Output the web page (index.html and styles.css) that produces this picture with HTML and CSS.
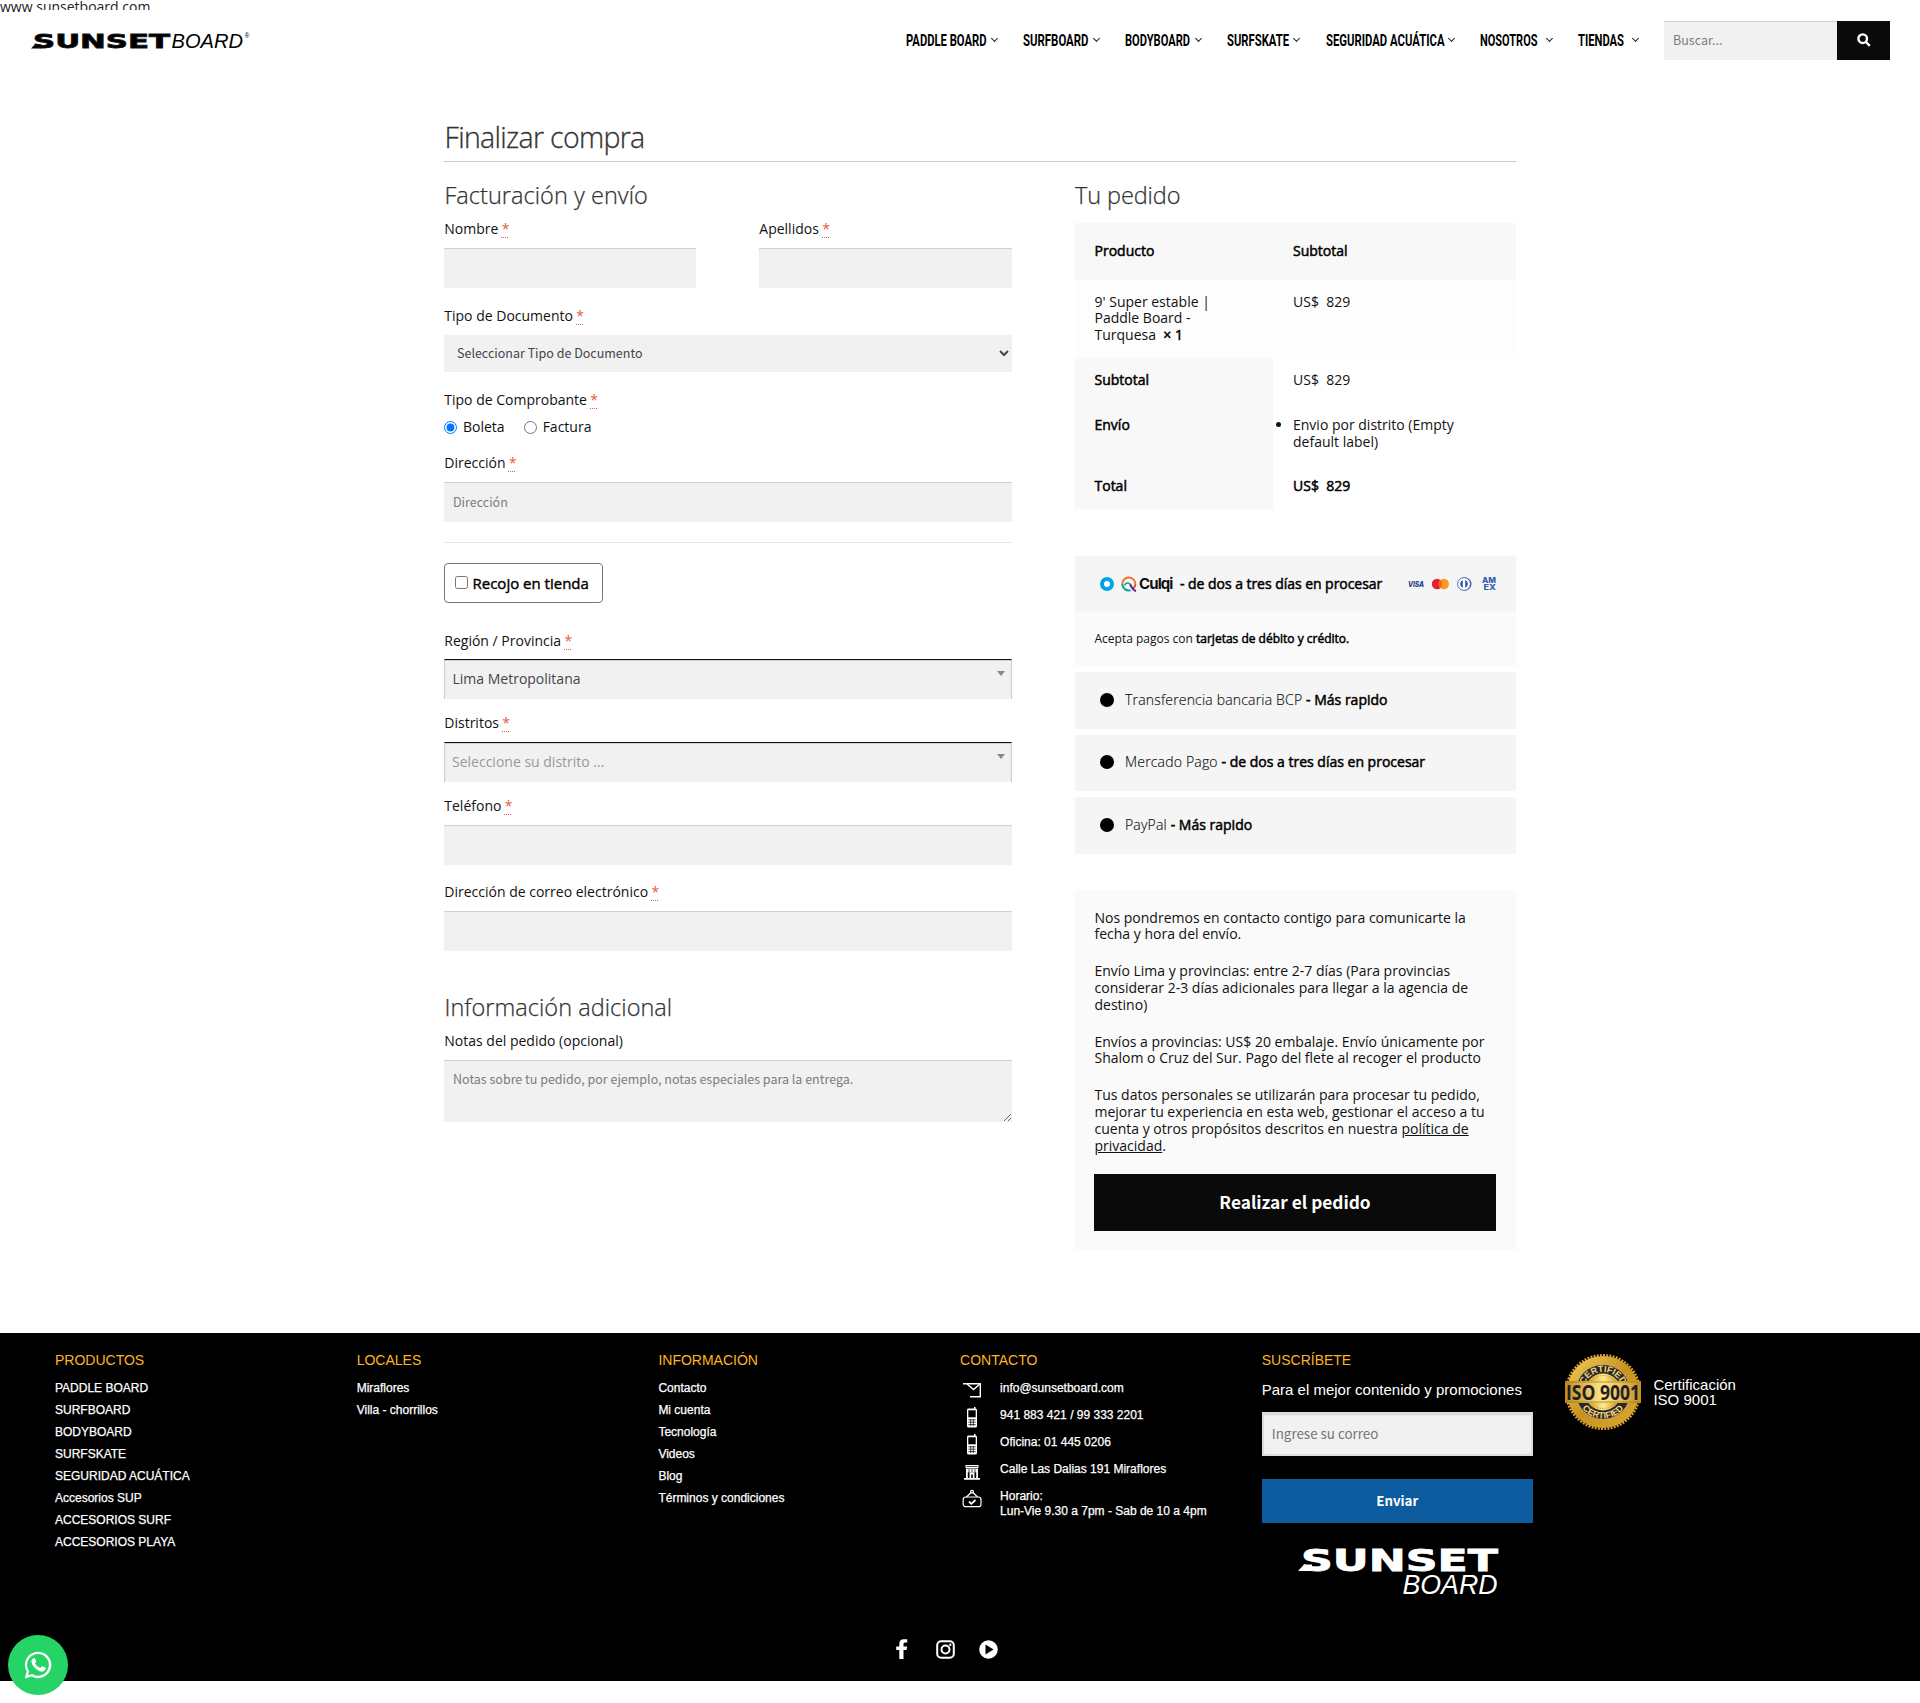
FILE: index.html
```html
<!DOCTYPE html>
<html lang="es">
<head>
<meta charset="utf-8">
<title>Finalizar compra - Sunset Board</title>
<link rel="stylesheet" href="styles.css">
</head>
<body>
<div class="site-url">www.sunsetboard.com</div>
<header class="header">
  <a class="logo"><svg width="220" height="22" viewBox="0 0 220 22">
    <path d="M0 17.600 4 13.200H10V17.600Z"/>
    <text class="logo-wide" x="2" y="17.400" font-size="19.500" textLength="137" lengthAdjust="spacingAndGlyphs">SUNSET</text>
    <text class="logo-thin" x="140.500" y="17.400" font-size="21" textLength="71.500" lengthAdjust="spacingAndGlyphs">BOARD</text>
    <text class="logo-reg" x="216" y="7" font-size="6.500" text-anchor="middle">®</text>
  </svg></a>
  <nav class="nav">
    <a style="width:93px"><svg width="81" height="20"><text x="0" y="16" textLength="80.500" lengthAdjust="spacingAndGlyphs">PADDLE BOARD</text></svg><i></i></a>
    <a style="width:77px"><svg width="66" height="20"><text x="0" y="16" textLength="65.500" lengthAdjust="spacingAndGlyphs">SURFBOARD</text></svg><i></i></a>
    <a style="width:77px"><svg width="66" height="20"><text x="0" y="16" textLength="65" lengthAdjust="spacingAndGlyphs">BODYBOARD</text></svg><i></i></a>
    <a style="width:74px"><svg width="63" height="20"><text x="0" y="16" textLength="62" lengthAdjust="spacingAndGlyphs">SURFSKATE</text></svg><i></i></a>
    <a style="width:130px"><svg width="120" height="20"><text x="0" y="16" textLength="118.500" lengthAdjust="spacingAndGlyphs">SEGURIDAD ACUÁTICA</text></svg><i></i></a>
    <a style="width:73px"><svg width="59" height="20"><text x="0" y="16" textLength="57.500" lengthAdjust="spacingAndGlyphs">NOSOTROS</text></svg><i></i></a>
    <a style="width:61px"><svg width="48" height="20"><text x="0" y="16" textLength="46" lengthAdjust="spacingAndGlyphs">TIENDAS</text></svg><i></i></a>
  </nav>
  <form class="search">
    <input class="control" type="text" placeholder="Buscar...">
    <button type="button"><svg width="14" height="14" viewBox="0 0 14 14"><circle cx="5.700" cy="5.700" r="4.300"/><path d="M9 9 12.800 12.800"/></svg></button>
  </form>
</header>

<main class="page">
  <h1>Finalizar compra</h1>
  <div class="columns">
    <form class="billing">
      <h3>Facturación y envío</h3>
      <div class="pair">
        <div class="field"><label>Nombre <abbr>*</abbr></label><input class="control" type="text"></div>
        <div class="field"><label>Apellidos <abbr>*</abbr></label><input class="control" type="text"></div>
      </div>
      <div class="field doc"><label>Tipo de Documento <abbr>*</abbr></label>
        <select class="select"><option>Seleccionar Tipo de Documento</option></select></div>
      <div class="receipt"><div class="caption">Tipo de Comprobante <abbr>*</abbr></div>
        <div class="radios"><label><input type="radio" name="r" checked>Boleta</label><label><input type="radio" name="r">Factura</label></div></div>
      <div class="field address"><label>Dirección <abbr>*</abbr></label><input class="control" type="text" placeholder="Dirección"></div>
      <div class="divider"></div>
      <label class="pickup"><input type="checkbox"><span>Recojo en tienda</span></label>
      <div class="field region"><label>Región / Provincia <abbr>*</abbr></label><div class="combo">Lima Metropolitana</div></div>
      <div class="field district"><label>Distritos <abbr>*</abbr></label><div class="combo empty">Seleccione su distrito ...</div></div>
      <div class="field phone"><label>Teléfono <abbr>*</abbr></label><input class="control" type="text"></div>
      <div class="field mail"><label>Dirección de correo electrónico <abbr>*</abbr></label><input class="control" type="text"></div>
      <h3 class="extra">Información adicional</h3>
      <div class="field"><label>Notas del pedido (opcional)</label><textarea class="control notes" placeholder="Notas sobre tu pedido, por ejemplo, notas especiales para la entrega."></textarea></div>
    </form>

    <section class="order">
      <h3>Tu pedido</h3>
      <div class="table">
        <div class="row head"><b>Producto</b><b>Subtotal</b></div>
        <div class="row item"><span>9' Super estable | Paddle Board - Turquesa&nbsp; <b>× 1</b></span><span>US$&nbsp; 829</span></div>
        <div class="row total"><b>Subtotal</b><span>US$&nbsp; 829</span></div>
        <div class="row total ship"><b>Envío</b><ul><li>Envio por distrito (Empty default label)</li></ul></div>
        <div class="row total"><b>Total</b><b>US$&nbsp; 829</b></div>
      </div>
      <div class="methods">
        <div class="method culqi">
          <span class="dot on"></span>
          <svg class="q" width="16" height="17" viewBox="0 0 16 17" fill="none" stroke-width="2">
            <path stroke="#f2762e" d="M1.200 8.200A6.600 6.600 0 0 1 14.400 8"/>
            <path stroke="#e0523e" d="M14.400 8A6.600 6.600 0 0 1 12.200 12.700"/>
            <path stroke="#12a19a" d="M1.200 8A6.600 6.600 0 0 0 9.600 14.200"/>
            <path stroke="#12a19a" stroke-width="1.500" d="M3.500 9.500C4.500 6 8.500 6 10 9.500"/>
            <path stroke="#5b2a86" d="M9 8.500C10.500 10 11 14 15 15.300"/>
          </svg>
          <span class="culqi-name">Culqi</span>
          <b class="culqi-note">- de dos a tres días en procesar</b>
          <svg class="cards" width="90" height="16" viewBox="0 0 90 16">
            <text x="1" y="10.800" font-size="7" font-style="italic" fill="#2a3b8f" textLength="16" lengthAdjust="spacingAndGlyphs">VISA</text>
            <circle cx="30" cy="8" r="5.200" fill="#e8202c"/><circle cx="36.800" cy="8" r="5.200" fill="#f79a1e"/><path d="M33.400 4.100a5.200 5.200 0 0 1 0 7.800 5.200 5.200 0 0 1 0-7.800" fill="#f26722"/>
            <path d="M58 1.500a6.500 6.500 0 0 1 0 13z" fill="#3558a8"/><circle cx="57" cy="8" r="6.400" fill="#fff" stroke="#3558a8" stroke-width=".9"/><path d="M55.800 4a4.300 4.300 0 0 0 0 8zM58.200 4a4.300 4.300 0 0 1 0 8z" fill="#3558a8"/>
            <text x="75" y="7.300" font-size="7.500" fill="#2f5fae" textLength="14" lengthAdjust="spacingAndGlyphs">AM</text>
            <text x="76.500" y="14.200" font-size="7.500" fill="#2f5fae" textLength="12.500" lengthAdjust="spacingAndGlyphs">EX</text>
          </svg>
        </div>
        <div class="accept">Acepta pagos con <b>tarjetas de débito y crédito.</b></div>
        <div class="method m1"><span class="dot"></span><span class="name">Transferencia bancaria BCP <b>- Más rapido</b></span></div>
        <div class="method m2"><span class="dot"></span><span class="name">Mercado Pago <b>- de dos a tres días en procesar</b></span></div>
        <div class="method m1"><span class="dot"></span><span class="name">PayPal <b>- Más rapido</b></span></div>
      </div>
      <div class="place">
        <p>Nos pondremos en contacto contigo para comunicarte la<br>fecha y hora del envío.</p>
        <p>Envío Lima y provincias: entre 2-7 días (Para provincias<br>considerar 2-3 días adicionales para llegar a la agencia de<br>destino)</p>
        <p>Envíos a provincias: US$ 20 embalaje. Envío únicamente por<br>Shalom o Cruz del Sur. Pago del flete al recoger el producto</p>
        <p>Tus datos personales se utilizarán para procesar tu pedido,<br>mejorar tu experiencia en esta web, gestionar el acceso a tu<br>cuenta y otros propósitos descritos en nuestra <u>política de<br>privacidad</u>.</p>
        <button type="button">Realizar el pedido</button>
      </div>
    </section>
  </div>
</main>

<footer class="footer">
  <div class="foot-grid">
    <div><h4>PRODUCTOS</h4><ul class="links"><li>PADDLE BOARD</li><li>SURFBOARD</li><li>BODYBOARD</li><li>SURFSKATE</li><li>SEGURIDAD ACUÁTICA</li><li>Accesorios SUP</li><li>ACCESORIOS SURF</li><li>ACCESORIOS PLAYA</li></ul></div>
    <div><h4>LOCALES</h4><ul class="links"><li>Miraflores</li><li>Villa - chorrillos</li></ul></div>
    <div><h4>INFORMACIÓN</h4><ul class="links"><li>Contacto</li><li>Mi cuenta</li><li>Tecnología</li><li>Videos</li><li>Blog</li><li>Términos y condiciones</li></ul></div>
    <div><h4>CONTACTO</h4>
      <ul class="contact">
        <li><svg width="24" height="22" viewBox="0 0 24 22" fill="none" stroke="#fff" stroke-width="1.400"><path d="M3 3.800H20.300V16.800H10"/><path d="M7 4 13.500 9.500 20 4"/></svg><span>info@sunsetboard.com</span></li>
        <li><svg width="24" height="22" viewBox="0 0 24 22"><path d="M14 0h1.500v1.600Q17 1.800 17 3V19Q17 20.500 15.500 20.500H8.500Q7 20.500 7 19V3Q7 1.600 8.500 1.600H14z" fill="#fff"/><path d="M8.300 3.300h7.400v7h-7.400z" fill="#000"/><path d="M8.300 12.800h7.400M8.300 15.200h7.400M8.300 17.600h7.400M10.700 12v7M13.300 12v7" stroke="#000" stroke-width=".7"/></svg><span>941 883 421 / 99 333 2201</span></li>
        <li><svg width="24" height="22" viewBox="0 0 24 22"><path d="M14 0h1.500v1.600Q17 1.800 17 3V19Q17 20.500 15.500 20.500H8.500Q7 20.500 7 19V3Q7 1.600 8.500 1.600H14z" fill="#fff"/><path d="M8.300 3.300h7.400v7h-7.400z" fill="#000"/><path d="M8.300 12.800h7.400M8.300 15.200h7.400M8.300 17.600h7.400M10.700 12v7M13.300 12v7" stroke="#000" stroke-width=".7"/></svg><span>Oficina: 01 445 0206</span></li>
        <li><svg width="24" height="22" viewBox="0 0 24 22"><path d="M5.500 4h13v3h-13zM6 7.500h12v3.700h-12zM6 11h1.800v7H6zM16.200 11H18v7h-1.800zM4 17h16v1.800H4zM9.500 11.500h5V17h-1.700v-3.500h-1.600V17H9.500z" fill="#fff"/><path d="M6.500 5.500h11M9 8v3M12 8v3M15 8v3" stroke="#000" stroke-width=".7"/></svg><span>Calle Las Dalias 191 Miraflores</span></li>
        <li><svg width="24" height="22" viewBox="0 0 24 22" fill="none" stroke="#fff" stroke-width="1.200"><rect x="3.200" y="9" width="17.800" height="9.700" rx="2.500"/><path d="M6.500 9 11 4.500M17.500 9 13 4.500"/><circle cx="12" cy="3.800" r="1.400"/><path stroke-width="1.800" d="M9 13.500 11.300 15.800 15.500 12"/></svg><span>Horario:<br>Lun-Vie 9.30 a 7pm - Sab de 10 a 4pm</span></li>
      </ul>
    </div>
    <div class="subscribe"><h4>SUSCRÍBETE</h4>
      <p>Para el mejor contenido y promociones</p>
      <input type="text" placeholder="Ingrese su correo">
      <button type="button">Enviar</button>
      <svg class="foot-logo" width="204" height="50" viewBox="0 0 204 50" fill="#fff">
        <path d="M0 24 6 17.500H14V24Z"/>
        <text class="logo-wide" x="3" y="23.600" font-size="30" textLength="197" lengthAdjust="spacingAndGlyphs">SUNSET</text>
        <text class="logo-thin" x="104.500" y="46.500" font-size="28.500" textLength="95" lengthAdjust="spacingAndGlyphs">BOARD</text>
      </svg>
    </div>
    <div class="iso">
      <svg width="78" height="78" viewBox="-39 -39 78 78">
        <defs><linearGradient id="gold" x1="0" y1="0" x2="1" y2="1"><stop offset="0" stop-color="#f3cf5e"/><stop offset=".5" stop-color="#c9921f"/><stop offset="1" stop-color="#dba932"/></linearGradient>
        <linearGradient id="band"><stop offset="0" stop-color="#c08a1c"/><stop offset=".5" stop-color="#ffe98a"/><stop offset="1" stop-color="#c4901f"/></linearGradient></defs>
        <circle r="36.700" fill="none" stroke="#d9a636" stroke-width="2.600" stroke-dasharray="1.900 1.300"/>
        <circle r="36" fill="url(#gold)"/><circle r="27.500" fill="#2b262b" stroke="#f6dc7a" stroke-width=".6"/>
        <circle r="18.500" fill="url(#band)"/><circle r="16.500" fill="none" stroke="#a87814" stroke-width=".6" stroke-dasharray="1 1"/>
        <path id="arcTop" d="M-20 0A20 20 0 0 1 20 0" fill="none"/><path id="arcBottom" d="M-26.500 0A26.500 26.500 0 0 0 26.500 0" fill="none"/>
        <g class="seal-text" fill="#f2d772" font-size="9"><text text-anchor="middle"><textPath href="#arcTop" startOffset="50%">CERTIFIED</textPath></text><text text-anchor="middle"><textPath href="#arcBottom" startOffset="50%">CERTIFIED</textPath></text></g>
        <path d="M-38-11H38V11H-38Z" fill="url(#band)"/><path d="M-38-10H38M-38 10H38" stroke="#a5761a" stroke-width=".8"/>
        <text class="seal-num" x="-37" y="7.500" font-size="20.500" fill="#231f24" textLength="74" lengthAdjust="spacingAndGlyphs">ISO 9001</text>
      </svg>
      <span>Certificación<br>ISO 9001</span>
    </div>
  </div>
  <div class="social">
    <svg width="12" height="20" viewBox="0 0 12 20" fill="#fff"><path d="M3.300 20V11H.2V7.500H3.300V5Q3.300.4 7.600.2H11.200V3.600H9Q7.500 3.600 7.500 5.100V7.500H11.100L10.600 11H7.500V20Z"/></svg>
    <svg width="19" height="19" viewBox="0 0 19 19" fill="none" stroke="#fff" stroke-width="2"><rect x="1.200" y="1.200" width="16.600" height="16.600" rx="4"/><circle cx="9.500" cy="9.500" r="4"/><circle cx="14.300" cy="4.700" r=".6" stroke-width="1.200"/></svg>
    <svg width="19" height="19" viewBox="0 0 19 19"><circle cx="9.500" cy="9.500" r="9.300" fill="#fff"/><path d="M6.500 4.500 14.500 9.500 6.500 14.500Z"/></svg>
  </div>
</footer>
<a class="whatsapp"><svg width="28" height="28" viewBox="0 0 28 28"><path d="M.8 27.500 2.700 20.600A13.200 13.200 0 1 1 7.700 25.500Z" fill="#fff"/><path d="M4 24.300 5.100 20.200A10.900 10.900 0 1 1 8.200 23.100Z" fill="#25d366"/><path d="M9.300 7.200Q10.800 6.600 11.300 7.900L12.200 10.200Q12.400 10.800 11 12.400 12.800 15.700 16.300 17.100L17.700 15.500Q18.200 15 19 15.400L21.300 16.500Q21.800 16.900 21.500 18.200 20.700 20.600 17.700 20.700 14.500 20.400 11.200 17.300 7.500 13.500 7.400 10.600 7.400 8.200 9.300 7.200Z" fill="#fff"/></svg></a>
</body>
</html>
```
FILE: styles.css
```css
* { box-sizing: border-box; }
body {
  margin: 0;
  background: #fff;
  color: #111;
  font: 14px/16.8px "Open Sans", sans-serif;
}
h1, h3, h4, p, ul { margin: 0; padding: 0; font-weight: 400; }
input, select, textarea, button { margin: 0; font-family: "Noto Sans CJK SC", "Open Sans", sans-serif; border-radius: 0; }
b { font-weight: 400; letter-spacing: 0; -webkit-text-stroke: 0.5px currentColor; }

/* Header */
.site-url { height: 12px; font-size: 14px; line-height: 13px; color: #222; margin-bottom: -2px; }
.header {
  display: flex;
  align-items: flex-start;
  position: relative;
  margin-left: 31px;
  height: 106px;
  background: #fff;
}
.logo { padding-top: 21px; width: 874.500px; }
.logo svg, .nav svg, .search svg { display: block; overflow: visible; }
.logo-wide { font-family: "DejaVu Sans", sans-serif; font-weight: 700; stroke: currentColor; stroke-width: .8px; }
.logo-thin, .logo-reg { font-family: "Liberation Sans", sans-serif; font-style: italic; }
.foot-logo .logo-wide { stroke: #fff; }
.nav { display: flex; gap: 24.750px; padding-top: 20px; width: 758.500px; flex: none; }
.nav a { display: flex; justify-content: space-between; flex: none; }
.nav text { font: 700 16.500px "Roboto", sans-serif; fill: #000; }
.nav i { width: 5px; height: 5px; margin: 6px 1.500px 0 0; border: solid #222; border-width: 0 1.300px 1.300px 0; transform: rotate(45deg); }
.search { display: flex; margin-top: 11px; }
.search .control { width: 173px; height: 39px; }
.search button { width: 53px; height: 39px; border: 0; background: #0a0a0a; padding: 0 0 2px 20px; }
.search circle, .search path { fill: none; stroke: #fff; stroke-width: 2.400; }

/* Form controls */
.control {
  display: block;
  width: 100%;
  height: 40px;
  padding: 0 9px 2px;
  border: 0;
  background: #f1f1f1;
  box-shadow: inset 0 1px 1px rgba(0, 0, 0, .14);
  font-size: 12.500px;
}
.control::placeholder { color: #7c7c7c; }
.select { display: block; width: 100%; height: 37px; padding: 0 0 2px 9px; border: 0; background: #f1f1f1; color: #43454b; font-size: 12.500px; }
.notes { height: 62px; padding: 9px; line-height: 19px; resize: vertical; }
.combo {
  position: relative;
  height: 40px;
  padding: 0 7.500px;
  border: 1px solid #ccc;
  border-top: 1px solid #111;
  border-bottom: 0;
  background: #f1f1f1;
  box-shadow: inset 0 1px 1px rgba(0, 0, 0, .14);
  color: #43454b;
  line-height: 38px;
}
.combo.empty { padding-left: 7px; color: #999; }
.combo::after { content: ""; position: absolute; right: 6px; top: 11px; border: 4px solid transparent; border-top: 5px solid #888; border-bottom: 0; }

/* Checkout */
.page { width: 1072px; margin-left: 444px; }
h1 { height: 46px; padding: 0 0 5px .5px; border-bottom: 1px solid #ccc; color: #333; font-size: 28.500px; font-weight: 300; line-height: 42px; letter-spacing: -.68px; -webkit-text-stroke: .3px #333; }
h3 { color: #333; font-size: 23.500px; font-weight: 300; line-height: 30px; letter-spacing: .04px; -webkit-text-stroke: .25px #333; }
.columns { display: flex; justify-content: space-between; padding-top: 18px; height: 1171px; }
.billing { width: 568px; }
.billing h3 { margin-bottom: 9px; padding-left: .5px; }
.pair { display: flex; justify-content: space-between; }
.pair .field:first-child { width: 252px; }
.pair .field:last-child { width: 253px; }
.field > label { display: block; height: 29px; line-height: 20px; padding-left: .3px; }
abbr { margin-left: -.3px; color: #e2401c; text-decoration: underline dotted; text-decoration-thickness: 1px; text-underline-offset: 3px; opacity: .85; }
.doc, .receipt { margin-top: 18px; }
.caption { height: 27px; line-height: 20px; padding-left: .3px; }
.radios { display: flex; gap: 19px; line-height: 20px; }
.radios label { display: flex; align-items: center; gap: 6px; }
.radios input { width: 13px; height: 13px; margin: 0; }
.address { margin-top: 16px; }
.divider { height: 1px; margin: 20px 0; background: #e6e6e6; }
.pickup { display: flex; align-items: center; gap: 4.500px; width: 159px; height: 40px; padding: 0 10px; border: 1px solid #777; border-radius: 4px; font-size: 15px; color: #000; -webkit-text-stroke: .4px #000; }
.pickup input { width: 13px; height: 13px; margin: -2px 0 0; }
.region { margin-top: 28px; }
.region > label { height: 28px; }
.district, .phone { margin-top: 14px; }
.mail { margin-top: 17px; }
.extra { margin-top: 41px; }

/* Order summary */
.order { width: 441px; }
.order h3 { margin-bottom: 13px; letter-spacing: -.1px; }
.order b { color: #000; }
.row { display: grid; grid-template-columns: 198px 1fr; height: 45px; }
.row > * { padding: 14px 50px 0 19.500px; }
.row > :last-child { padding-left: 20px; }
.row.head { height: 57px; background: #f8f8f8; }
.row.head > * { padding-top: 20px; }
.row.item { height: 78px; background: #fdfdfd; }
.row.item > * { padding-top: 13.600px; }
.row.total > :first-child { background: #f8f8f8; }
.row.ship { height: 61px; }
.methods { margin-top: 47px; }
.method { display: flex; align-items: center; height: 57px; margin-top: 6px; padding: 0 19px 1px 25px; background: #f5f5f5; }
.method .name { font-weight: 300; letter-spacing: .18px; -webkit-text-stroke: .15px #111; }
.method .name b { -webkit-text-stroke: .5px #000; }
.method.m2 { height: 56px; padding-bottom: 2px; }
.method.culqi { height: 56px; margin-top: 0; padding-bottom: 0; }
.dot { width: 14px; height: 14px; margin-right: 11px; border-radius: 50%; background: #000; }
.dot.on { margin-right: 7px; border: 4.500px solid #00a3e6; background: #fff; }
.culqi-name { width: 41px; margin-left: 2px; font: 700 15px/20px "Inter", sans-serif; letter-spacing: -.9px; }
.culqi-note { letter-spacing: -.04px; }
.cards { margin-left: auto; font-family: "Inter", sans-serif; font-weight: 800; }
.accept { height: 54px; padding: 18.500px 19.500px; background: #fafafa; font-size: 12px; }
.place { height: 360px; margin-top: 36px; padding: 19.600px 19px 0; background: #fafafa; }
.place p { margin: 0 0 20px .5px; }
.place p:last-of-type { margin-bottom: 19.600px; }
.place button { display: block; width: 402px; height: 57px; padding: 0 0 2px; border: 0; background: #0a0a0a; color: #fff; font-size: 17.300px; font-weight: 700; }

/* Footer */
.footer { height: 348px; padding: 17px 0 0 55px; background: #000; color: #fff; font-family: "Liberation Sans", sans-serif; }
.foot-grid { display: grid; grid-template-columns: repeat(6, 301.700px); height: 289px; }
h4 { color: #ffb41f; font-size: 14px; line-height: 20px; }
.links { padding-top: 7px; list-style: none; font-size: 12px; line-height: 22px; -webkit-text-stroke: .25px #fff; }
.contact { padding-top: 10px; list-style: none; font-size: 12px; line-height: 15px; }
.contact li { display: flex; gap: 16px; height: 27px; white-space: nowrap; }
.contact span { padding-top: 1px; -webkit-text-stroke: .25px #fff; }
.contact svg { flex: none; }
.subscribe p { padding-top: 10px; font-size: 15px; line-height: 20px; }
.subscribe input { display: block; width: 271px; height: 44px; margin-top: 12px; padding: 0 8px 2px; border: 2px solid #ddd; background: #f1f1f1; box-shadow: inset 0 1px 1px rgba(0, 0, 0, .125); font-size: 13.400px; }
.subscribe button { display: block; width: 271px; height: 44px; margin-top: 23px; padding: 0 0 2px; border: 0; background: #0c5b9e; color: #fff; font-size: 13.300px; font-weight: 700; }
.foot-logo { display: block; margin: 24px 0 0 36px; overflow: visible; }
.iso { display: flex; gap: 11px; padding: 3px 0 0 1px; font-size: 15px; line-height: 15px; }
.iso span { padding-top: 24px; }
.seal-text { font-family: "Liberation Sans", sans-serif; font-weight: 700; }
.seal-num { font-family: "Open Sans", sans-serif; font-weight: 700; }
.social { display: flex; align-items: flex-end; gap: 28px; height: 20px; padding-left: 841px; }
.social svg:last-child { margin-left: -4px; }
.whatsapp { position: fixed; left: 8px; top: 1635px; display: flex; align-items: center; justify-content: center; width: 60px; height: 60px; border-radius: 50%; background: #25d366; }
```
